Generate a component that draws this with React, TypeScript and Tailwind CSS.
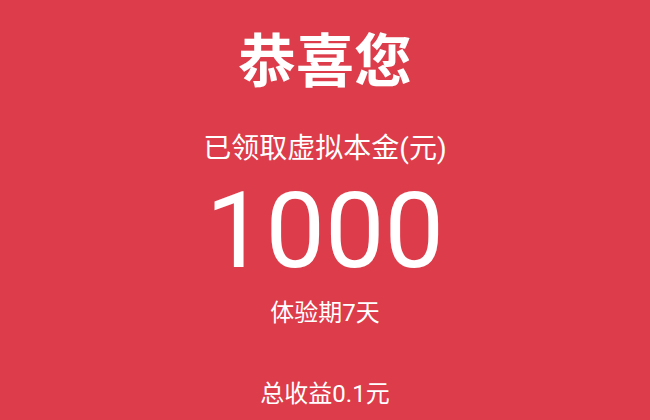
import React from "react";

export default function App() {
  const cjk = { fontFamily: 'Roboto, "Noto Sans CJK SC", sans-serif' };
  return (
    <div
      className="w-[650px] h-[420px] bg-[#dd3c4b] flex flex-col items-center text-white overflow-hidden"
      style={cjk}
    >
      <h1 className="mt-[33px] text-[58px] leading-[58px] font-bold">恭喜您</h1>
      <p className="mt-[44px] text-[28px] leading-[28px]">已领取虚拟本金(元)</p>
      <p className="mt-[15px] text-[106px] leading-[106px]">1000</p>
      <p className="mt-[17px] text-[24px] leading-[24px]">体验期7天</p>
      <p className="mt-[57px] text-[24px] leading-[24px]">总收益0.1元</p>
    </div>
  );
}
